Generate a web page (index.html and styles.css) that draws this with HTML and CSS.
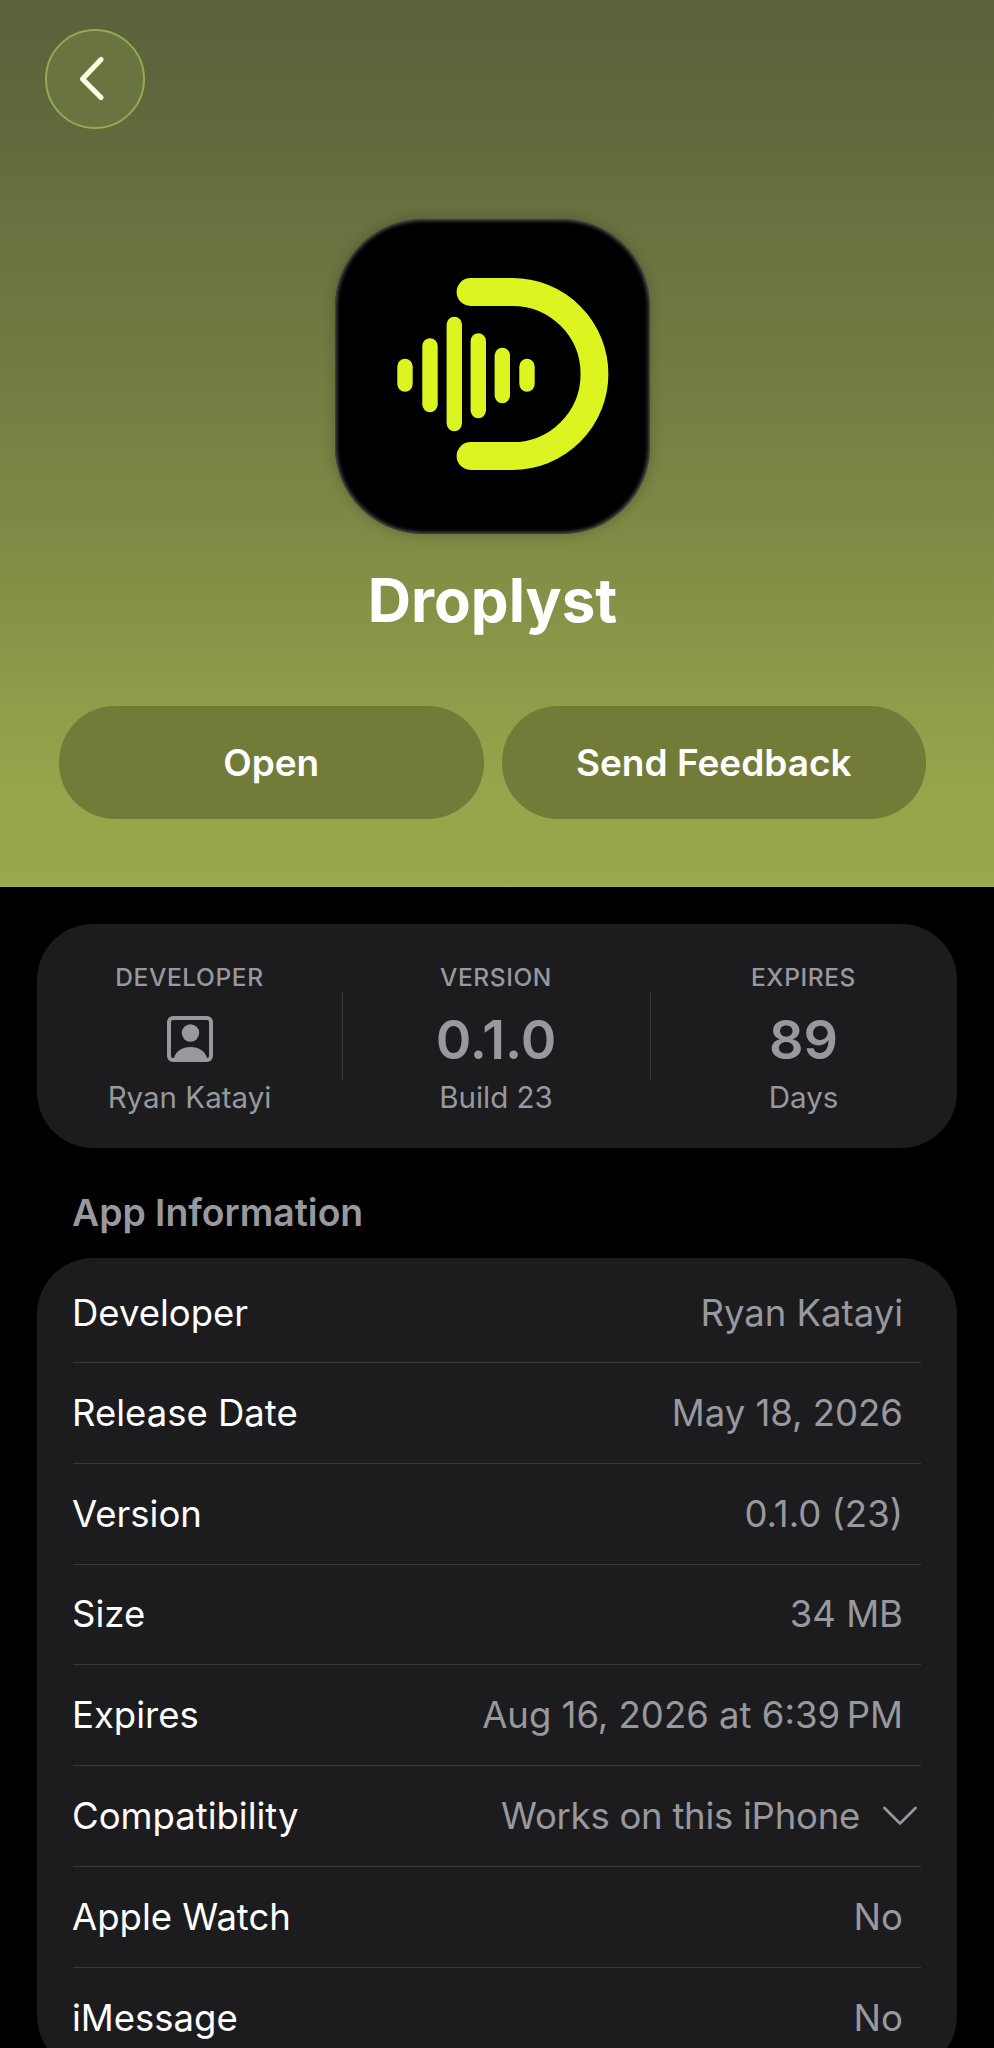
FILE: index.html
```
<!DOCTYPE html>
<html lang="en">
<head>
<meta charset="utf-8">
<title>Droplyst</title>
<link rel="stylesheet" href="styles.css">
</head>
<body>
<div class="page">
  <header class="hero">
    <div class="nav">
      <button class="back" aria-label="Back">
        <svg viewBox="0 0 34 48" width="34" height="48"><path d="M23 4.500 L4.500 24 L23 42.500" fill="none" stroke="#fbfde0" stroke-width="5.200" stroke-linecap="round" stroke-linejoin="round"/></svg>
      </button>
    </div>
    <div class="app-icon">
      <svg viewBox="0 0 315 315" width="315" height="315">
        <g fill="none" stroke="#dcf520" stroke-linecap="round">
          <path d="M135.500 73 H177.500 A82 82 0 0 1 177.500 237 H135.500" stroke-width="27.800"/>
          <g stroke-width="15.400">
            <path d="M70 147.400 V165"/><path d="M95 127 V185.600"/><path d="M119.300 105.400 V204.600"/><path d="M143.300 122 V191.600"/><path d="M167.300 136.400 V176.600"/><path d="M192 147.400 V165"/>
          </g>
        </g>
      </svg>
    </div>
    <h1 class="app-name">Droplyst</h1>
    <div class="actions">
      <button class="action">Open</button>
      <button class="action">Send Feedback</button>
    </div>
  </header>
  <main class="content">
    <section class="stats">
      <div class="stat">
        <div class="stat-label">DEVELOPER</div>
        <div class="stat-main">
          <svg viewBox="0 0 46 46" width="46" height="46"><rect x="2" y="2" width="42" height="42" rx="4" fill="none" stroke="#98989f" stroke-width="4"/><circle cx="23.500" cy="17" r="8.700" fill="#98989f"/><path d="M7 42 C9 35 15 31 23.500 31 C32 31 38 35 40 42 Z" fill="#98989f"/></svg>
        </div>
        <div class="stat-sub">Ryan Katayi</div>
      </div>
      <div class="stat">
        <div class="stat-label">VERSION</div>
        <div class="stat-main">0.1.0</div>
        <div class="stat-sub">Build 23</div>
      </div>
      <div class="stat">
        <div class="stat-label">EXPIRES</div>
        <div class="stat-main">89</div>
        <div class="stat-sub">Days</div>
      </div>
    </section>
    <h2 class="section-title">App Information</h2>
    <section class="info">
      <div class="row"><span>Developer</span><span class="value">Ryan Katayi</span></div>
      <div class="row"><span>Release Date</span><span class="value">May 18, 2026</span></div>
      <div class="row"><span>Version</span><span class="value">0.1.0 (23)</span></div>
      <div class="row"><span>Size</span><span class="value">34 MB</span></div>
      <div class="row"><span>Expires</span><span class="value">Aug 16, 2026 at 6:39&#8239;PM</span></div>
      <div class="row row-expand"><span>Compatibility</span><span class="value">Works on this iPhone</span>
        <svg class="chev" viewBox="0 0 34 20" width="34" height="20"><path d="M1.500 2 L17 17.500 L32.500 2" fill="none" stroke="#98989f" stroke-width="2.600" stroke-linecap="round" stroke-linejoin="round"/></svg>
      </div>
      <div class="row"><span>Apple Watch</span><span class="value">No</span></div>
      <div class="row"><span>iMessage</span><span class="value">No</span></div>
    </section>
  </main>
</div>
</body>
</html>
```
FILE: styles.css
```
* { box-sizing: border-box; }
html, body { margin: 0; padding: 0; background: #000; }
body { font-family: Inter, "Liberation Sans", sans-serif; color: #fff; }
.page { width: 994px; height: 2048px; overflow: hidden; background: #000; }

.hero {
  height: 887px;
  padding: 29px 68px 0 45px;
  border-bottom: 2px solid #a2ae50;
  background: linear-gradient(180deg, #5a6039 0%, #687140 25%, #7b8544 55%, #97a44b 88%, #9aa74c 100%);
}
.nav { height: 100px; }
.back {
  display: flex; align-items: center; justify-content: center;
  width: 100px; height: 100px; padding: 0;
  border-radius: 50%;
  border: 2px solid #93aa50;
  background: #6a7440;
}
.app-icon {
  width: 315px; height: 315px;
  margin: 90px 0 0 290px;
  border-radius: 88px;
  background: #000;
  box-shadow: inset 0 0 4px 1px #6b6d6d, 0 0 12px rgba(50,50,30,.4);
}
.app-icon svg { display: block; }
.app-name {
  margin: 28px 0 0 14px;
  font-size: 60px; line-height: 76px; font-weight: 700; text-align: center;
}
.actions { display: flex; gap: 18px; margin: 68px 0 0 14px; }
.action {
  flex: 1; height: 113px;
  border: 0; border-radius: 56px;
  background: #727c38; color: #fff;
  font: 600 37px Inter, "Liberation Sans", sans-serif;
}

.content { padding: 37px 37px 0; }
.stats {
  display: grid; grid-template-columns: 305px 308px 1fr;
  height: 224px; padding-top: 39px;
  border-radius: 56px; background: #1c1c1e;
}
.stat { display: flex; flex-direction: column; align-items: center; color: #98989f; position: relative; }
.stat + .stat::before {
  content: ""; position: absolute; left: 0; top: 29px;
  width: 1px; height: 88px; background: #38383b;
}
.stat-label { font-size: 24.500px; line-height: 28px; font-weight: 500; letter-spacing: .6px; }
.stat-main { display: flex; align-items: center; justify-content: center; height: 62px; margin-top: 17px; font-size: 54px; font-weight: 600; }
.stat-sub { margin-top: 10px; font-size: 29.500px; line-height: 34px; }

.section-title {
  margin: 44px 0 0 35px;
  font-size: 37.300px; line-height: 42px; font-weight: 600; color: #98989f;
}
.info {
  margin-top: 24px; height: 814px; padding: 0 36px;
  border-radius: 56px; background: #1c1c1e;
  overflow: hidden;
}
.row {
  display: flex; align-items: center; justify-content: space-between;
  height: 100.800px; padding-right: 18px;
  font-size: 36.500px;
  border-bottom: 1px solid #38383a;
}
.row:first-child { height: 105px; padding-top: 6px; }
.row:last-child { border-bottom: 0; }
.row > span:first-child { margin-left: -1px; }
.value { color: #98989f; }
.row-expand { padding-right: 4px; }
.row-expand > span:first-child { margin-right: auto; }
.row-expand .value { letter-spacing: -.25px; }
.chev { margin-left: 23px; }
```
